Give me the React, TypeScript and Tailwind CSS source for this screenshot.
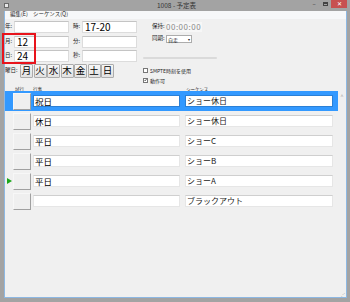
import React from "react";

const days = ["月", "火", "水", "木", "金", "土", "日"];

type Row = {
  event: string;
  seq: string;
  selected?: boolean;
  current?: boolean;
};

const rows: Row[] = [
  { event: "祝日", seq: "ショー休日", selected: true },
  { event: "休日", seq: "ショー休日" },
  { event: "平日", seq: "ショーC" },
  { event: "平日", seq: "ショーB" },
  { event: "平日", seq: "ショーA", current: true },
  { event: "", seq: "ブラックアウト" },
];

const Field = ({ label, value }: { label: string; value?: string }) => (
  <div className="flex items-center h-[12px]">
    <span className="w-[9px] text-[5.5px] leading-none text-[#222]">{label}:</span>
    <div className="w-[55px] h-full bg-white border border-[#dcdcdc] border-t-[#c4c4c4] flex items-center pl-[2px] text-[10px] leading-none text-black">
      {value}
    </div>
  </div>
);

const Check = ({ label, checked }: { label: string; checked?: boolean }) => (
  <div className="flex items-center gap-[2px] h-[6px]">
    <div className="w-[5px] h-[5px] bg-white border border-[#777] flex items-center justify-center">
      {checked && (
        <svg width="4" height="4" viewBox="0 0 4 4">
          <path d="M0.5 2 L1.6 3.2 L3.5 0.6" stroke="#222" strokeWidth="0.8" fill="none" />
        </svg>
      )}
    </div>
    <span className="text-[5px] leading-none text-[#222]">{label}</span>
  </div>
);

const GridRow = ({ row }: { row: Row }) => (
  <div
    className={`flex items-center h-[20px] w-[333px] ${
      row.selected ? "bg-[#3399ff]" : ""
    }`}
  >
    <div className="w-[8px] flex items-center justify-center">
      {row.current && (
        <svg width="5" height="6" viewBox="0 0 5 6">
          <path d="M0 0 L5 3 L0 6 Z" fill="#1aa81a" />
        </svg>
      )}
    </div>
    <div className="w-[18px] h-[17px] bg-[#efefef] border border-[#f7f7f7] border-b-[#a0a0a0] border-r-[#a0a0a0]" />
    <div
      className={`ml-[2px] w-[147px] h-[12px] bg-white border ${
        row.selected ? "border-[#2b80d6]" : "border-[#e6e6e6] border-t-[#cfcfcf]"
      } flex items-center pl-[1px] text-[8.5px] leading-none text-black`}
    >
      {row.event}
    </div>
    <div
      className={`ml-[5px] w-[148px] h-[12px] bg-white border ${
        row.selected ? "border-[#2b80d6]" : "border-[#e6e6e6] border-t-[#cfcfcf]"
      } flex items-center pl-[1px] text-[8px] leading-none text-[#222]`}
    >
      {row.seq}
    </div>
  </div>
);

export default function App() {
  return (
    <div className="relative w-[350px] h-[302px] bg-[#a3a3a3] flex flex-col overflow-hidden font-['Noto_Sans_CJK_JP','Liberation_Sans',sans-serif]">
      {/* title bar */}
      <div className="relative h-[11px] flex items-center">
        <div className="ml-[4px] w-[5px] h-[5px] bg-[#e8e8e8] border border-[#6a6a6a]" />
        <span className="absolute left-[157px] top-[2px] text-[6.5px] leading-none text-[#333]">
          1008 - 予定表
        </span>
        <div className="ml-auto flex items-start h-full">
          <span className="w-[10px] text-center text-[6px] leading-[8px] text-[#333]">–</span>
          <div className="w-[12px] flex justify-center pt-[2px]">
            <div className="w-[5px] h-[4px] border border-[#444] border-t-2" />
          </div>
          <div className="w-[16px] h-[8px] mr-[3px] bg-[#c75050] flex items-center justify-center text-white text-[6px] leading-none">
            ✕
          </div>
        </div>
      </div>

      {/* client area */}
      <div className="flex-1 ml-[4px] mr-[3px] mb-[4px] border-l border-r border-b border-[#8db8e3] bg-[#f0f0f0] flex flex-col">
        {/* menu */}
        <div className="h-[8px] bg-[#f7f8f9] flex items-center gap-[5px] pl-[5px] text-[5.5px] leading-none text-[#222]">
          <span>編集(E)</span>
          <span>シーケンス(Q)</span>
        </div>

        {/* form */}
        <div className="flex pt-[2px]">
          <div className="flex flex-col w-[133px]">
            <div className="grid grid-cols-[64px_64px] gap-x-[4px] gap-y-[2.5px]">
              <Field label="年" />
              <Field label="時" value="17-20" />
              <Field label="月" value="12" />
              <Field label="分" />
              <Field label="日" value="24" />
              <Field label="秒" />
            </div>
            <div className="flex items-center mt-[2px]">
              <span className="w-[15px] text-[5.5px] leading-none text-[#222]">曜日:</span>
              <div className="flex gap-[0.5px]">
                {days.map((d) => (
                  <div
                    key={d}
                    className="w-[13px] h-[14px] bg-gradient-to-b from-[#f6f6f6] to-[#e2e2e2] border border-[#acacac] rounded-[1px] flex items-center justify-center text-[9.5px] leading-none text-black"
                  >
                    {d}
                  </div>
                ))}
              </div>
            </div>
          </div>

          <div className="flex flex-col ml-[5px]">
            <div className="flex items-center ml-[9px] h-[10px] mt-[1px]">
              <span className="w-[14px] text-[5.5px] leading-none text-[#222]">保持:</span>
              <div className="w-[36px] h-[10px] bg-[#f7f7f7] flex items-center text-[8px] leading-none text-[#8a8a8a] tracking-[0.5px]">
                00:00:00
              </div>
            </div>
            <div className="flex items-center ml-[9px] h-[8px] mt-[3px]">
              <span className="w-[14px] text-[5.5px] leading-none text-[#222]">同期:</span>
              <div className="w-[26px] h-[8px] bg-white border border-[#acacac] flex items-center justify-between px-[1px] text-[5px] leading-none text-[#222]">
                <span>自走</span>
                <span className="text-[4px]">▾</span>
              </div>
            </div>
            <div className="w-[74px] h-[2px] bg-[#dadada] rounded-full mt-[14px]" />
            <div className="flex flex-col gap-[4px] mt-[8px]">
              <Check label="SMPTE時刻を使用" />
              <Check label="動作可" checked />
            </div>
          </div>
        </div>

        {/* grid header */}
        <div className="flex items-end h-[8px] text-[4.5px] leading-none text-[#222]">
          <span className="ml-[10px] w-[18px]">試行</span>
          <span className="w-[153px]">行事</span>
          <span>シーケンス</span>
        </div>

        {/* grid */}
        <div className="relative flex-1 flex">
          <div className="flex flex-col">
            {rows.map((r, i) => (
              <GridRow key={i} row={r} />
            ))}
          </div>
          <div className="flex-1 flex flex-col items-center justify-between pt-[2px] pb-[1px] text-[5px] leading-none text-[#a0a0a0]">
            <span>˄</span>
            <span className="self-end mr-[1px] text-[4px]">⋰</span>
          </div>
        </div>
      </div>

      {/* red annotation box */}
      <div className="absolute left-[2px] top-[33px] w-[34px] h-[31px] border-2 border-[#e8141c]" />
    </div>
  );
}
